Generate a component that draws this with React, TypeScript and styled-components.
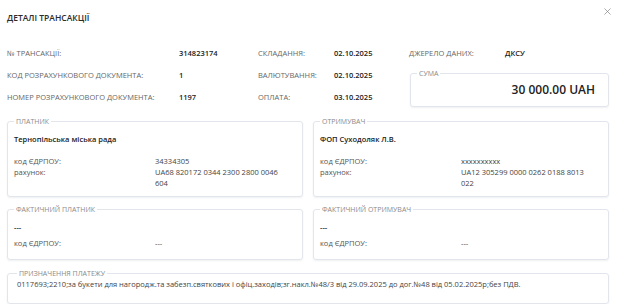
import styled, { createGlobalStyle } from "styled-components";
import { X } from "lucide-react";

const GlobalStyle = createGlobalStyle`
  body {
    margin: 0;
    background: #ffffff;
    font-family: "Open Sans", "Noto Sans", sans-serif;
    color: #222;
  }
`;

const Page = styled.div`
  width: 623px;
  box-sizing: border-box;
  padding: 0 14px 0 7px;
`;

const Header = styled.div`
  display: flex;
  justify-content: space-between;
  align-items: flex-start;
`;

const Title = styled.h1`
  margin: 12px 0 0;
  font-size: 8.5px;
  line-height: 11px;
  font-weight: 600;
  color: #2b2b2b;
`;

const CloseButton = styled.button`
  margin: 6px -4px 0 0;
  padding: 0;
  border: none;
  background: none;
  color: #7a7a7a;
  display: flex;
  cursor: pointer;
`;

const InfoGrid = styled.div`
  display: grid;
  grid-template-columns: 172px 79px 76px 75px 96px 1fr;
  grid-auto-rows: 22px;
  align-items: center;
  margin-top: 19px;
`;

const Label = styled.span`
  font-size: 7.5px;
  color: #666;
  text-transform: uppercase;
`;

const Value = styled.span`
  font-size: 7.5px;
  font-weight: 600;
  color: #222;
`;

const Box = styled.fieldset`
  margin: 0;
  min-width: 0;
  border: 1px solid #e2e5eb;
  border-radius: 3px;
  box-shadow: 0 1px 2px rgba(30, 40, 60, 0.07);
  padding: 0 6px 7px;
`;

const Legend = styled.legend`
  padding: 0 2px;
  font-size: 7px;
  line-height: 9px;
  color: #8a8a8a;
  text-transform: uppercase;
`;

const SumBox = styled(Box)`
  grid-column: 5 / 7;
  grid-row: 2 / 4;
  align-self: stretch;
  margin: 4.5px 0 1px 1px;
  padding: 0 13px 0 6px;
  display: flex;
  justify-content: flex-end;
  align-items: center;
`;

const SumValue = styled.span`
  font-size: 12px;
  font-weight: 600;
  color: #222;
  margin-top: -5px;
`;

const TwoCols = styled.div`
  display: grid;
  grid-template-columns: 1fr 1fr;
  gap: 10px;
  margin-top: 8.5px;
`;

const Name = styled.div<{ $top: number }>`
  margin-top: ${(p) => p.$top}px;
  font-size: 7.5px;
  line-height: 11px;
  font-weight: 600;
  color: #222;
`;

const Rows = styled.div<{ $top: number }>`
  display: grid;
  grid-template-columns: 1fr 1fr;
  margin-top: ${(p) => p.$top}px;
  font-size: 7.5px;
  line-height: 11px;
  color: #555;
`;

const RowValue = styled.span`
  color: #444;
  max-width: 130px;
`;

const PurposeBox = styled(Box)`
  margin-top: 8.5px;
  padding: 0 9px 13px;
`;

const PurposeText = styled.div`
  margin-top: 1px;
  font-size: 7.5px;
  line-height: 11px;
  color: #444;
`;

type Party = {
  title: string;
  name: string;
  code: string;
  account?: string;
};

function PartyBox({ party, fact }: { party: Party; fact?: boolean }) {
  return (
    <Box style={fact ? { paddingBottom: 10 } : undefined}>
      <Legend>{party.title}</Legend>
      <Name $top={8}>{party.name}</Name>
      <Rows $top={fact ? 5 : 11}>
        <span>код ЄДРПОУ:</span>
        <RowValue>{party.code}</RowValue>
        {party.account && (
          <>
            <span>рахунок:</span>
            <RowValue>{party.account}</RowValue>
          </>
        )}
      </Rows>
    </Box>
  );
}

const payer: Party = {
  title: "Платник",
  name: "Тернопільська міська рада",
  code: "34334305",
  account: "UA68 820172 0344 2300 2800 0046 604",
};

const receiver: Party = {
  title: "Отримувач",
  name: "ФОП Суходоляк Л.В.",
  code: "xxxxxxxxxx",
  account: "UA12 305299 0000 0262 0188 8013 022",
};

const factPayer: Party = { title: "Фактичний платник", name: "---", code: "---" };
const factReceiver: Party = { title: "Фактичний отримувач", name: "---", code: "---" };

export default function App() {
  return (
    <Page>
      <GlobalStyle />
      <Header>
        <Title>ДЕТАЛІ ТРАНСАКЦІЇ</Title>
        <CloseButton aria-label="close">
          <X size={11} strokeWidth={1.4} />
        </CloseButton>
      </Header>

      <InfoGrid>
        <Label>№ ТРАНСАКЦІЇ:</Label>
        <Value>314823174</Value>
        <Label>Складання:</Label>
        <Value>02.10.2025</Value>
        <Label>Джерело даних:</Label>
        <Value>ДКСУ</Value>

        <Label>Код розрахункового документа:</Label>
        <Value>1</Value>
        <Label>Валютування:</Label>
        <Value>02.10.2025</Value>
        <SumBox>
          <Legend>Сума</Legend>
          <SumValue>30 000.00 UAH</SumValue>
        </SumBox>

        <Label>Номер розрахункового документа:</Label>
        <Value>1197</Value>
        <Label>Оплата:</Label>
        <Value>03.10.2025</Value>
      </InfoGrid>

      <TwoCols>
        <PartyBox party={payer} />
        <PartyBox party={receiver} />
      </TwoCols>

      <TwoCols>
        <PartyBox party={factPayer} fact />
        <PartyBox party={factReceiver} fact />
      </TwoCols>

      <PurposeBox>
        <Legend>Призначення платежу</Legend>
        <PurposeText>
          0117693;2210;за букети для нагородж.та забезп.святкових і офіц.заходів;зг.накл.№48/3 від 29.09.2025 до дог.№48 від 05.02.2025р;без ПДВ.
        </PurposeText>
      </PurposeBox>
    </Page>
  );
}
